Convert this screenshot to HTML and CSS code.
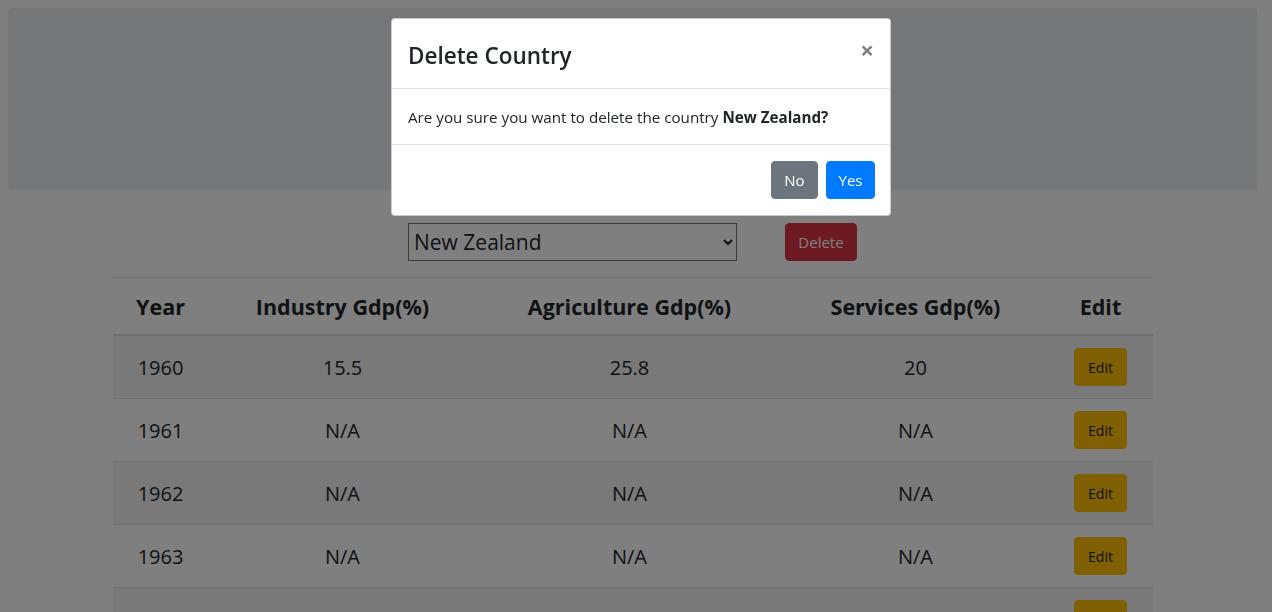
FILE: index.html
```html
<!DOCTYPE html>
<html>
<head>
<meta charset="utf-8">
<link rel="stylesheet" href="styles.css">
</head>
<body>
<div class="page">
  <div class="jumbotron"></div>
  <div class="controls">
    <select class="country-select">
      <option>New Zealand</option>
    </select>
    <button class="btn btn-danger">Delete</button>
  </div>
  <table class="data-table">
    <thead>
      <tr><th class="c1">Year</th><th class="c2">Industry Gdp(%)</th><th class="c3">Agriculture Gdp(%)</th><th class="c4">Services Gdp(%)</th><th class="c5">Edit</th></tr>
    </thead>
    <tbody>
      <tr><td>1960</td><td>15.5</td><td>25.8</td><td>20</td><td><button class="btn btn-warning">Edit</button></td></tr>
      <tr><td>1961</td><td>N/A</td><td>N/A</td><td>N/A</td><td><button class="btn btn-warning">Edit</button></td></tr>
      <tr><td>1962</td><td>N/A</td><td>N/A</td><td>N/A</td><td><button class="btn btn-warning">Edit</button></td></tr>
      <tr><td>1963</td><td>N/A</td><td>N/A</td><td>N/A</td><td><button class="btn btn-warning">Edit</button></td></tr>
      <tr><td>1964</td><td>N/A</td><td>N/A</td><td>N/A</td><td><button class="btn btn-warning">Edit</button></td></tr>
    </tbody>
  </table>
</div>
<div class="backdrop"></div>
<div class="modal">
  <div class="modal-header">
    <h5 class="modal-title">Delete Country</h5>
    <span class="close">&times;</span>
  </div>
  <div class="modal-body">Are you sure you want to delete the country <b>New Zealand?</b></div>
  <div class="modal-footer">
    <button class="btn btn-secondary">No</button>
    <button class="btn btn-primary">Yes</button>
  </div>
</div>
</body>
</html>
```

FILE: styles.css
```css
html, body { margin: 0; padding: 0; }
body {
  font-family: "Open Sans", "Noto Sans", sans-serif;
  color: #212529;
  background: #fff;
  height: 612px;
  overflow: hidden;
}
.page { padding: 8px 15px 0 8px; }
.jumbotron {
  background: #e9ecef;
  border-radius: 4px;
  height: 182px;
}
.controls {
  display: flex;
  justify-content: center;
  gap: 48px;
  margin-top: 33px;
}
.country-select {
  width: 329px;
  height: 38px;
  font-family: "Open Sans", sans-serif;
  font-size: 21px;
  color: #212529;
  border: 1px solid #767676;
  border-radius: 0;
  background: #fff;
  padding: 0 1px;
}
.btn {
  font-family: "Open Sans", sans-serif;
  font-size: 15px;
  height: 38px;
  padding: 0 12px;
  border: 1px solid transparent;
  border-radius: 4px;
  color: #fff;
  cursor: pointer;
}
.btn-danger { background: #dc3545; border-color: #dc3545; width: 72px; }
.btn-warning { background: #ffc107; border-color: #ffc107; color: #212529; font-size: 14px; width: 53px; padding: 0; }
.btn-secondary { background: #6c757d; border-color: #6c757d; width: 47px; padding: 0; }
.btn-primary { background: #007bff; border-color: #007bff; width: 49px; padding: 0; }

.data-table {
  width: 1040px;
  margin: 16px auto 0;
  border-collapse: collapse;
  font-size: 20px;
  text-align: center;
}
.data-table th {
  font-weight: 700;
  font-size: 21.5px;
  height: 56px;
  border-top: 1px solid #dee2e6;
  border-bottom: 2px solid #dee2e6;
  padding: 0;
}
.data-table td {
  height: 62px;
  padding: 0;
  border-bottom: 1px solid #dee2e6;
}
.data-table tbody tr:nth-child(odd) { background: rgba(0,0,0,.05); }
.c1 { width: 96px; }
.c2 { width: 268px; }
.c3 { width: 306px; }
.c4 { width: 266px; }
.c5 { width: 104px; }

.backdrop {
  position: fixed;
  inset: 0;
  background: rgba(0,0,0,.5);
}
.modal {
  position: fixed;
  top: 18px;
  left: 391px;
  width: 498px;
  background: #fff;
  border: 1px solid rgba(0,0,0,.2);
  border-radius: 4px;
}
.modal-header {
  display: flex;
  align-items: center;
  justify-content: space-between;
  height: 69px;
  padding: 0 16px;
  border-bottom: 1px solid #dee2e6;
}
.modal-title {
  margin: 3px 0 0;
  font-size: 22.5px;
  font-weight: 600;
}
.close {
  font-size: 24px;
  font-weight: 700;
  color: #000;
  opacity: .5;
  line-height: 1;
  margin-top: -7px;
}
.modal-body {
  height: 56px;
  display: flex;
  align-items: center;
  padding: 0 16px;
  font-size: 15.2px;
  border-bottom: 1px solid #dee2e6;
  box-sizing: border-box;
}
.modal-body b { margin-left: 4px; }
.modal-footer {
  height: 70px;
  display: flex;
  align-items: center;
  justify-content: flex-end;
  gap: 8px;
  padding: 0 15px;
}
```
